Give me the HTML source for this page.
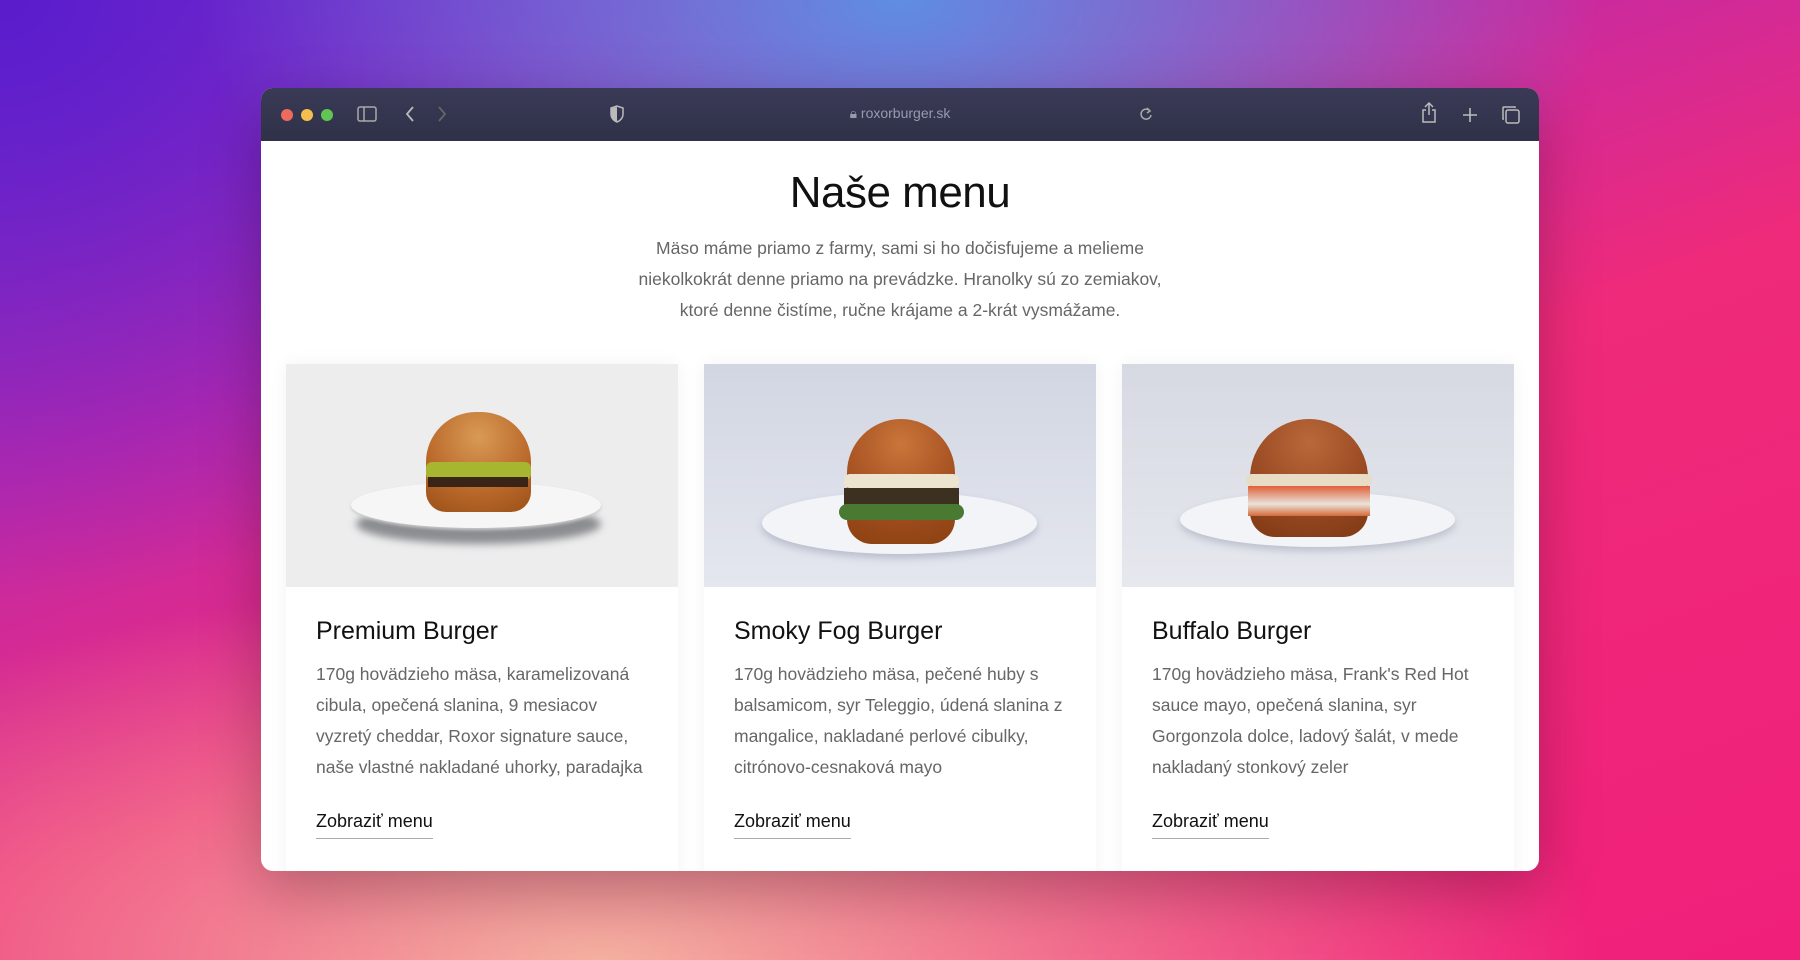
<!DOCTYPE html>
<html><head><meta charset="utf-8"><style>
*{margin:0;padding:0;box-sizing:border-box}
body{width:1800px;height:960px;overflow:hidden;position:relative;font-family:"Liberation Sans",sans-serif;
background:
radial-gradient(ellipse 700px 400px at 900px 0px,#5f8de2 0%,rgba(95,141,226,0) 100%),
radial-gradient(ellipse 700px 600px at 0px 0px,#5a1ccc 0%,rgba(90,28,204,0) 100%),
radial-gradient(ellipse 1000px 380px at 600px 960px,#f4b0a0 0%,rgba(244,176,160,0) 100%),
linear-gradient(160deg,#7a35d0 0%,#c02aa8 30%,#ef2a7a 55%,#f0207a 100%);}
.win{position:absolute;left:261px;top:88px;width:1278px;height:783px;border-radius:12px;overflow:hidden;background:#fff;box-shadow:0 20px 60px rgba(0,0,0,.25)}
.bar{height:53px;background:linear-gradient(#3a3a56,#2f3148);position:relative}
.dot{position:absolute;top:21px;width:12px;height:12px;border-radius:50%}
.url{position:absolute;left:0;width:100%;top:17px;text-align:center;color:#9a9aae;font-size:14px}
h1{text-align:center;font-weight:400;font-size:44px;color:#111;margin-top:27px;letter-spacing:-.5px}
.lead{text-align:center;color:#666;font-size:17.5px;line-height:31px;margin-top:15px}
.card{position:absolute;top:276px;width:392px;height:520px;background:#fff;box-shadow:0 0 18px rgba(0,0,0,.05)}
.img{height:223px;position:relative;overflow:hidden}
.card h2{font-weight:400;font-size:25px;color:#111;margin:30px 0 0 30px}
.card p{color:#666;font-size:17.5px;line-height:31px;margin:13px 30px 0 30px}
.card a{position:absolute;left:30px;top:447px;font-size:18px;color:#111;text-decoration:none;border-bottom:1px solid #aaa;padding-bottom:6px}
</style></head><body>
<div class="win">
<div class="bar">
<div class="dot" style="left:20px;background:#ec6a5e"></div>
<div class="dot" style="left:40px;background:#f4bf4f"></div>
<div class="dot" style="left:60px;background:#61c554"></div>
<svg style="position:absolute;left:96px;top:18px" width="20" height="16" fill="none" stroke="#aaa" stroke-width="1.5"><rect x="1" y="1" width="18" height="14" rx="2"/><line x1="7" y1="1" x2="7" y2="15"/></svg>
<svg style="position:absolute;left:144px;top:18px" width="10" height="16" fill="none" stroke="#bbb" stroke-width="1.8"><path d="M8 1L2 8l6 7"/></svg>
<svg style="position:absolute;left:176px;top:18px" width="10" height="16" fill="none" stroke="#666" stroke-width="1.8"><path d="M2 1l6 7-6 7"/></svg>
<svg style="position:absolute;left:348px;top:17px" width="16" height="18" fill="none" stroke="#bbb" stroke-width="1.5"><path d="M8 1L2 3v6c0 4 3 7 6 8 3-1 6-4 6-8V3z"/><path d="M8 2v15c-3-1-5.5-4-5.5-8V3.5z" fill="#bbb" stroke="none"/></svg>
<div class="url">🔒︎ roxorburger.sk</div>
<svg style="position:absolute;left:878px;top:19px" width="14" height="14" fill="none" stroke="#aaa" stroke-width="1.5"><path d="M11 4A5 5 0 1 0 12 8"/><path d="M8 1l3 3-3 2"/></svg>
<svg style="position:absolute;left:1160px;top:14px" width="16" height="22" fill="none" stroke="#bbb" stroke-width="1.5"><path d="M5 8H2v12h12V8h-3M8 13V2M4 5l4-4 4 4"/></svg>
<svg style="position:absolute;left:1201px;top:19px" width="16" height="16" stroke="#bbb" stroke-width="1.6"><path d="M8 1v14M1 8h14"/></svg>
<svg style="position:absolute;left:1240px;top:17px" width="19" height="19" fill="none" stroke="#bbb" stroke-width="1.5"><rect x="5" y="5" width="13" height="13" rx="2"/><path d="M3 14H2V3a1 1 0 0 1 1-1h11v1"/></svg>
</div>
<h1>Naše menu</h1>
<div class="lead">Mäso máme priamo z farmy, sami si ho dočisfujeme a melieme<br>niekolkokrát denne priamo na prevádzke. Hranolky sú zo zemiakov,<br>ktoré denne čistíme, ručne krájame a 2-krát vysmážame.</div>

<div class="card" style="left:25px">
<div class="img" style="background:#ededee">
<div style="position:absolute;left:70px;top:140px;width:245px;height:40px;border-radius:50%;background:#8c8d90;filter:blur(4px)"></div>
<div style="position:absolute;left:65px;top:118px;width:250px;height:46px;border-radius:50%;background:#f6f6f6;box-shadow:0 2px 3px #ccc"></div>
<div style="position:absolute;left:140px;top:48px;width:105px;height:100px;border-radius:50px 50px 20px 20px;background:radial-gradient(circle at 50% 25%,#d99a55,#b9682a 60%,#9a5018)"></div>
<div style="position:absolute;left:140px;top:98px;width:105px;height:18px;background:#a8b530;border-radius:6px"></div>
<div style="position:absolute;left:142px;top:113px;width:100px;height:10px;background:#3a2418"></div>
</div>
<h2>Premium Burger</h2>
<p>170g hovädzieho mäsa, karamelizovaná cibula, opečená slanina, 9 mesiacov<br>vyzretý cheddar, Roxor signature sauce, naše vlastné nakladané uhorky, paradajka</p>
<a>Zobraziť menu</a></div>

<div class="card" style="left:443px">
<div class="img" style="background:linear-gradient(#d2d6e2,#e4e7ef)">
<div style="position:absolute;left:58px;top:128px;width:275px;height:62px;border-radius:50%;background:#f2f4f8;box-shadow:0 4px 8px #b8bccb"></div>
<div style="position:absolute;left:143px;top:55px;width:108px;height:125px;border-radius:54px 54px 25px 25px;background:radial-gradient(circle at 50% 20%,#c9753a,#a44f20 55%,#8a4010)"></div>
<div style="position:absolute;left:140px;top:110px;width:115px;height:14px;background:#ede4cf;border-radius:6px"></div>
<div style="position:absolute;left:140px;top:124px;width:115px;height:24px;background:#3c3020"></div>
<div style="position:absolute;left:135px;top:140px;width:125px;height:16px;background:#4a7a32;border-radius:8px"></div>
</div>
<h2>Smoky Fog Burger</h2>
<p>170g hovädzieho mäsa, pečené huby s balsamicom, syr Teleggio, údená slanina z mangalice, nakladané perlové cibulky, citrónovo-cesnaková mayo</p>
<a>Zobraziť menu</a></div>

<div class="card" style="left:861px">
<div class="img" style="background:linear-gradient(#d6d9e2,#e6e8ee)">
<div style="position:absolute;left:58px;top:128px;width:275px;height:55px;border-radius:50%;background:#f3f4f7;box-shadow:0 4px 8px #bcc0cc"></div>
<div style="position:absolute;left:128px;top:55px;width:118px;height:118px;border-radius:59px 59px 25px 25px;background:radial-gradient(circle at 50% 20%,#b9683a,#9a4a22 55%,#7e3914)"></div>
<div style="position:absolute;left:124px;top:110px;width:126px;height:12px;background:#e8dcc4;border-radius:6px"></div>
<div style="position:absolute;left:126px;top:122px;width:122px;height:30px;background:linear-gradient(#e0603a,#e9e3da 60%,#d56a3a)"></div>
</div>
<h2>Buffalo Burger</h2>
<p>170g hovädzieho mäsa, Frank's Red Hot sauce mayo, opečená slanina, syr Gorgonzola dolce, ladový šalát, v mede nakladaný stonkový zeler</p>
<a>Zobraziť menu</a></div>
</div>
</body></html>
